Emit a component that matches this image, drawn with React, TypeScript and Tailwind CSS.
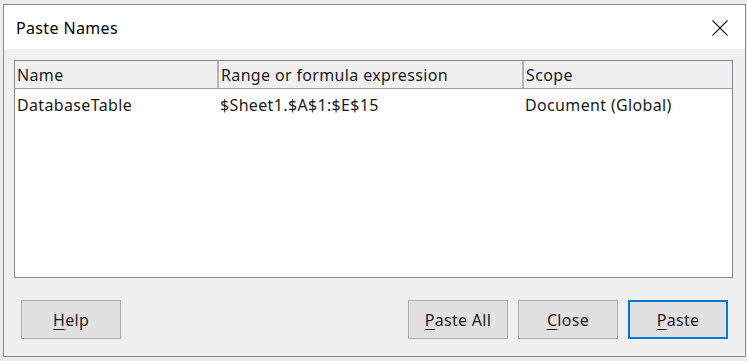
const font = "font-['Segoe_UI','Noto_Sans','Liberation_Sans',sans-serif]";

function DialogButton({ mnemonic, rest, primary }: { mnemonic: string; rest: string; primary?: boolean }) {
  return (
    <button
      className={`flex h-[39px] w-[100px] items-center justify-center bg-[#e1e1e1] text-[16px] tracking-[0.3px] text-[#1a1a1a] ${
        primary ? "border-2 border-[#0078d7]" : "border border-[#adadad]"
      }`}
    >
      <span>
        <span className="underline decoration-1 underline-offset-[3px]">{mnemonic}</span>
        {rest}
      </span>
    </button>
  );
}

export default function App() {
  return (
    <div className={`h-[361px] w-[747px] bg-[#ececec] pl-[3px] pt-[4px] ${font}`}>
      <div className="flex h-[353px] w-[743px] flex-col border border-[#8a8a8a] bg-[#f0f0f0]">
        <div className="flex h-[44px] items-center justify-between bg-white pl-[12px] pr-[17px]">
          <span className="mt-[1px] text-[16px] tracking-[0.35px] text-black">Paste Names</span>
          <svg width="16" height="16" viewBox="0 0 16 16" className="mt-[1px]">
            <path d="M0.5 0.5L15.5 15.5M15.5 0.5L0.5 15.5" stroke="#1a1a1a" strokeWidth="1.1" />
          </svg>
        </div>

        <div className="flex flex-1 flex-col px-[10px] pt-[11px]">
          <div className="h-[218px] w-[719px] border border-[#828790] bg-white text-[16px] tracking-[0.35px] text-[#1a1a1a]">
            <div className="flex h-[28px] items-center border-b border-[#a0a0a0] bg-[#f0f0f0]">
              <div className="w-[202px] pl-[2px]">Name</div>
              <div className="flex h-full w-[305px] items-center border-l-2 border-[#b4b4b4] pl-[2px]">Range or formula expression</div>
              <div className="flex h-full flex-1 items-center border-l-2 border-[#b4b4b4] pl-[2px]">Scope</div>
            </div>
            <div className="flex h-[32px] items-center">
              <div className="w-[202px] pl-[2px]">DatabaseTable</div>
              <div className="w-[307px] pl-[3px]">$Sheet1.$A$1:$E$15</div>
              <div className="flex-1 pl-[1px]">Document (Global)</div>
            </div>
          </div>

          <div className="mt-[22px] flex items-center pl-[7px] pr-[7px]">
            <DialogButton mnemonic="H" rest="elp" />
            <div className="ml-auto flex gap-[10px]">
              <DialogButton mnemonic="P" rest="aste All" />
              <DialogButton mnemonic="C" rest="lose" />
              <DialogButton mnemonic="P" rest="aste" primary />
            </div>
          </div>
        </div>
      </div>
    </div>
  );
}
